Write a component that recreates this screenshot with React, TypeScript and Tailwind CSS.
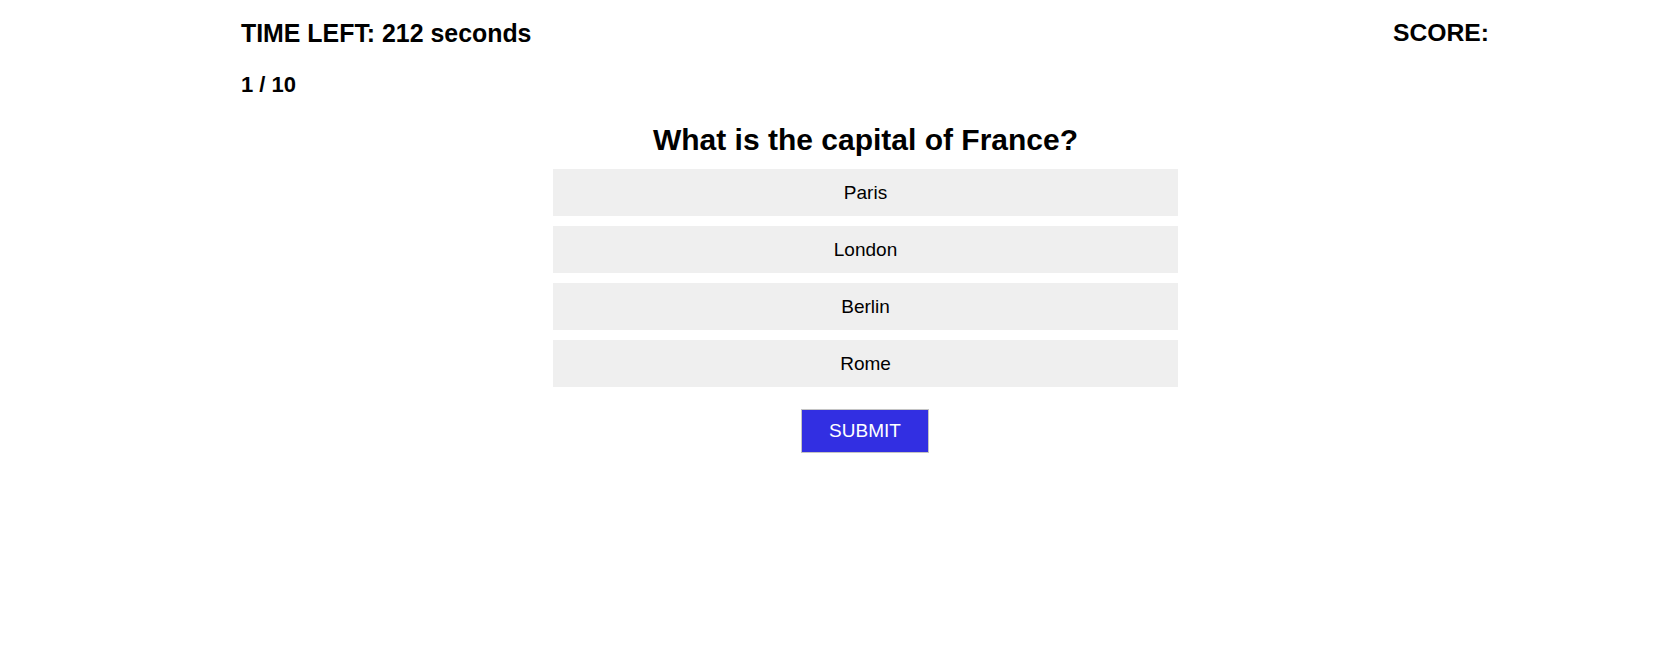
export default function App() {
  const options = ["Paris", "London", "Berlin", "Rome"];
  return (
    <div className="min-h-[668px] bg-white font-['Liberation_Sans',Arial,sans-serif] text-black">
      <div className="ml-[241px] w-[1249px]">
        <div className="flex justify-between pt-[19px]">
          <span className="text-[24.9px] font-bold leading-[28px]">TIME LEFT: 212 seconds</span>
          <span className="text-[24.7px] font-bold leading-[28px] mr-[1px]">SCORE: </span>
        </div>
        <div className="mt-[25px] text-[22px] font-bold leading-[26px]">1 / 10</div>
        <div className="flex flex-col items-center">
          <h2 className="mt-[24px] text-[30px] font-bold leading-[36px]">What is the capital of France?</h2>
          <div className="mt-[11px] flex flex-col gap-[10px]">
            {options.map((o) => (
              <div
                key={o}
                className="flex h-[47px] w-[625px] items-center justify-center bg-[#efefef] pt-[1px] text-[19px] leading-[22px]"
              >
                {o}
              </div>
            ))}
          </div>
          <button className="mt-[22px] -ml-[1px] flex h-[44px] w-[128px] items-center justify-center border border-[#c4c4c4] bg-[#322fe2] text-[19px] leading-[22px] text-white">
            SUBMIT
          </button>
        </div>
      </div>
    </div>
  );
}
